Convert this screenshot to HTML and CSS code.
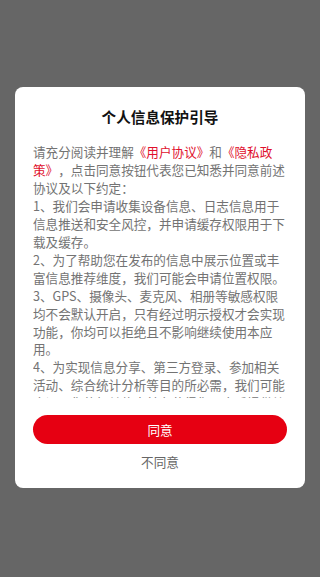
FILE: index.html
```html
<!DOCTYPE html>
<html lang="zh-CN">
<head>
<meta charset="utf-8">
<meta name="viewport" content="width=device-width, initial-scale=1">
<title>个人信息保护引导</title>
<link rel="stylesheet" href="styles.css">
</head>
<body>
<div class="overlay">
  <div class="dialog">
    <h1 class="dialog-title">个人信息保护引导</h1>
    <div class="dialog-body">
      <p>请充分阅读并理解<span class="link">《用户协议》</span>和<span class="link">《隐私政策》</span>，点击同意按钮代表您已知悉并同意前述协议及以下约定：</p>
      <p>1、我们会申请收集设备信息、日志信息用于信息推送和安全风控，并申请缓存权限用于下载及缓存。</p>
      <p>2、为了帮助您在发布的信息中展示位置或丰富信息推荐维度，我们可能会申请位置权限。</p>
      <p>3、GPS、摄像头、麦克风、相册等敏感权限均不会默认开启，只有经过明示授权才会实现功能，你均可以拒绝且不影响继续使用本应用。</p>
      <p>4、为实现信息分享、第三方登录、参加相关活动、综合统计分析等目的所必需，我们可能会调用您的相关信息并在获得您同意后提供给第三方。</p>
    </div>
    <button class="btn-agree" type="button">同意</button>
    <button class="btn-disagree" type="button">不同意</button>
  </div>
</div>
</body>
</html>
```
FILE: styles.css
```css
html, body {
  margin: 0;
  padding: 0;
}
body {
  background: #666666;
  font-family: "Noto Sans CJK SC", "Noto Sans", sans-serif;
  width: 320px;
  height: 577px;
  overflow: hidden;
  text-spacing-trim: space-all;
}
.overlay {
  padding: 87px 15px 0;
}
.dialog {
  background: #ffffff;
  border-radius: 8px;
  height: 401px;
  box-sizing: border-box;
  padding: 20px 18px 0;
  display: flex;
  flex-direction: column;
}
.dialog-title {
  margin: 0;
  font-size: 14.6px;
  line-height: 20px;
  font-weight: 700;
  color: #111111;
  text-align: center;
}
.dialog-body {
  margin-top: 16px;
  height: 254.7px;
  overflow: hidden;
  font-size: 12.6px;
  line-height: 17.95px;
  color: #737373;
  text-spacing-trim: space-all;
}
.dialog-body p {
  margin: 0;
}
.link {
  color: #e0102c;
}
.btn-agree {
  margin-top: 17.3px;
  height: 29px;
  border: 0;
  border-radius: 15px;
  background: #e60012;
  color: #ffffff;
  font-family: inherit;
  font-size: 12.6px;
  padding: 0;
}
.btn-disagree {
  margin-top: 8px;
  border: 0;
  background: transparent;
  color: #666666;
  font-family: inherit;
  font-size: 12.6px;
  line-height: 20px;
  padding: 0;
}
```
